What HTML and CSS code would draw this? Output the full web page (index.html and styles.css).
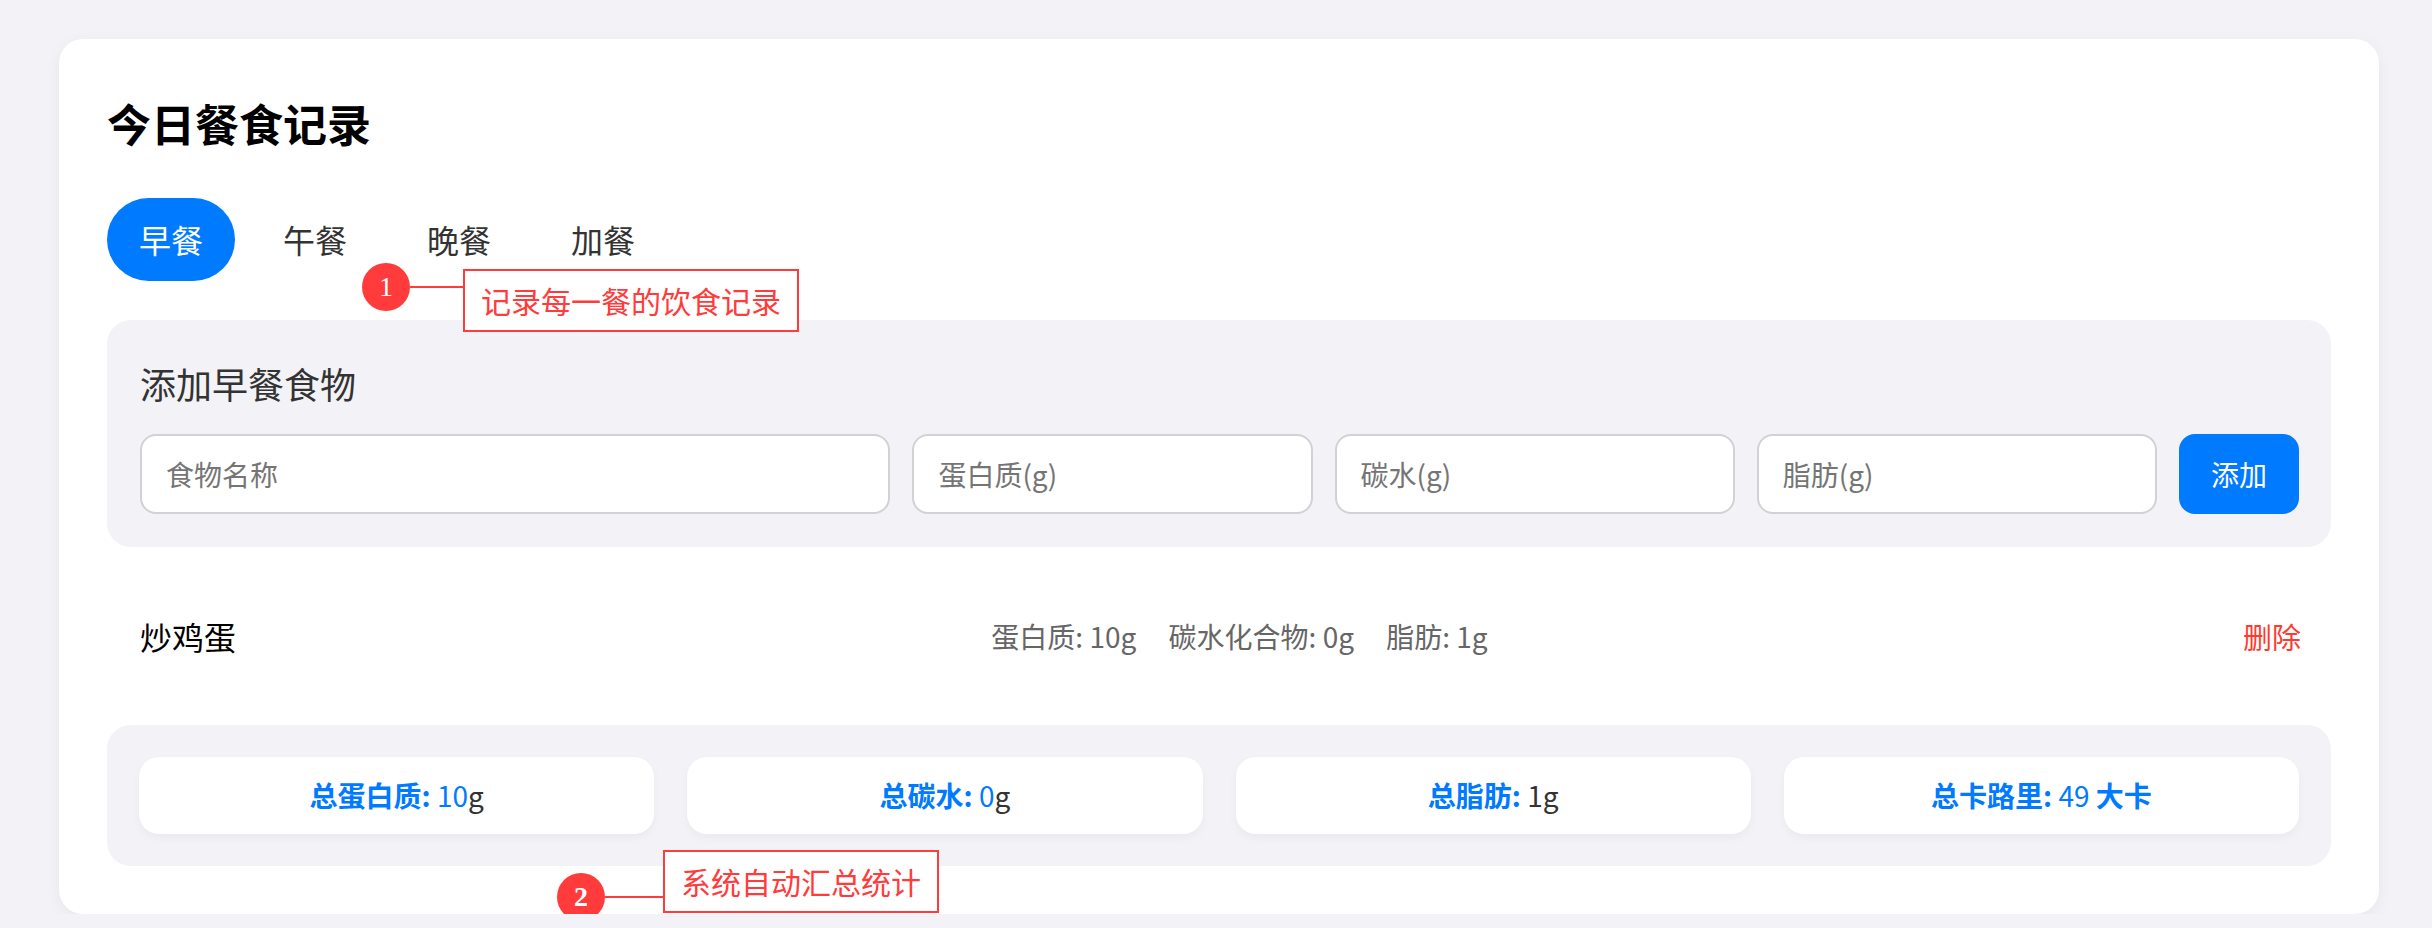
FILE: index.html
```html
<!DOCTYPE html>
<html lang="zh-CN">

<head>
    <meta charset="UTF-8">
    <meta name="viewport" content="width=device-width, initial-scale=1.0">
    <title>今日餐食记录</title>
    <link rel="stylesheet" href="styles.css">
</head>

<body>
    <div id="card">
        <h1 id="title">今日餐食记录</h1>

        <div id="tabs">
            <div class="tab active">早餐</div>
            <div class="tab">午餐</div>
            <div class="tab">晚餐</div>
            <div class="tab">加餐</div>
        </div>

        <div id="addPanel">
            <div id="addTitle">添加早餐食物</div>
            <div id="addForm">
                <input type="text" placeholder="食物名称">
                <input type="text" placeholder="蛋白质(g)">
                <input type="text" placeholder="碳水(g)">
                <input type="text" placeholder="脂肪(g)">
                <div id="addBtn">添加</div>
            </div>
        </div>

        <div id="foodList">
            <div class="food">
                <div class="foodName">炒鸡蛋</div>
                <div class="macros">
                    <span>蛋白质: 10g</span>
                    <span>碳水化合物: 0g</span>
                    <span>脂肪: 1g</span>
                </div>
                <div class="delete">删除</div>
            </div>
        </div>

        <div id="summary">
            <div class="sum"><b>总蛋白质:</b> <span class="num">10</span>g</div>
            <div class="sum"><b>总碳水:</b> <span class="num">0</span>g</div>
            <div class="sum"><b>总脂肪:</b> 1g</div>
            <div class="sum"><b>总卡路里:</b> <span class="num">49</span> <b>大卡</b></div>
        </div>

        <!-- 標註 -->
        <div class="note note1">
            <div class="dot">1</div>
            <div class="line"></div>
            <div class="label">记录每一餐的饮食记录</div>
        </div>
        <div class="note note2">
            <div class="dot">2</div>
            <div class="line"></div>
            <div class="label">系统自动汇总统计</div>
        </div>
    </div>
</body>

</html>
```

FILE: styles.css
```css
body {
    margin: 0;
    padding: 39px 53px 0 59px;
    background: #f2f2f7;
    font-family: "Noto Sans CJK SC", "Noto Sans", sans-serif;
    color: #333;
    overflow: hidden;
}

#card {
    position: relative;
    background: #fff;
    border-radius: 24px;
    padding: 48px;
    box-shadow: 0 4px 16px rgba(0, 0, 0, 0.05);
}

#title {
    margin: 10px 0 0;
    font-size: 44px;
    line-height: 53px;
    font-weight: bold;
    color: #000;
}

#tabs {
    display: flex;
    gap: 16px;
    margin-top: 48px;
}

.tab {
    padding: 22px 32px;
    font-size: 32px;
    line-height: 39px;
    border-radius: 42px;
    color: #333;
}

.tab.active {
    background: #007aff;
    color: #fff;
}

#addPanel {
    margin-top: 39px;
    background: #f2f2f7;
    border-radius: 24px;
    padding: 32px 32px 33px 33px;
}

#addTitle {
    margin-top: 10px;
    font-size: 36px;
    line-height: 43px;
    color: #333;
}

#addForm {
    display: grid;
    grid-template-columns: 15fr 8fr 8fr 8fr auto;
    gap: 22px;
    margin-top: 29px;
}

#addForm input {
    min-width: 0;
    height: 80px;
    box-sizing: border-box;
    border: 2px solid #d1d1d6;
    border-radius: 16px;
    padding: 0 24px;
    font-family: inherit;
    font-size: 28px;
    color: #333;
    background: #fff;
    outline: none;
}

#addForm input::placeholder {
    color: #757575;
}

#addBtn {
    height: 80px;
    line-height: 80px;
    padding: 0 32px;
    border-radius: 16px;
    background: #007aff;
    color: #fff;
    font-size: 28px;
    text-align: center;
}

#foodList {
    margin-top: 45px;
}

.food {
    display: flex;
    justify-content: space-between;
    align-items: center;
    padding: 24px 30px 24px 33px;
    line-height: 40px;
}

.foodName {
    font-size: 32px;
    color: #000;
}

.macros {
    font-size: 28px;
    color: #666;
}

.macros span {
    margin: 0 13px;
}

.delete {
    font-size: 29px;
    color: #ff3b30;
}

#summary {
    display: grid;
    grid-template-columns: repeat(4, 1fr);
    gap: 33px;
    margin-top: 45px;
    background: #f2f2f7;
    border-radius: 24px;
    padding: 32px;
}

.sum {
    background: #fff;
    border-radius: 20px;
    padding: 20px 0;
    line-height: 37px;
    text-align: center;
    font-size: 28px;
    color: #333;
    box-shadow: 0 4px 10px rgba(0, 0, 0, 0.04);
}

.sum b,
.num {
    color: #007aff;
}

/* 標註 */
.note {
    position: absolute;
    display: flex;
    align-items: flex-start;
}

.note1 {
    left: 303px;
    top: 224px;
}

.note2 {
    left: 498px;
    top: 811px;
}

.dot {
    width: 48px;
    height: 48px;
    border-radius: 50%;
    background: #ff3b3b;
    color: #fff;
    font-family: "Liberation Serif", serif;
    font-size: 28px;
    line-height: 48px;
    text-align: center;
}

.line {
    height: 2px;
    background: #ff3b3b;
    margin-top: 23px;
}

.note1 .line {
    width: 53px;
}

.note1 .label {
    margin-top: 6px;
}

.note2 .dot {
    margin-top: 23px;
    font-weight: bold;
}

.note2 .line {
    width: 58px;
    margin-top: 46px;
}

.label {
    background: #fff;
    border: 2px solid #ff3b3b;
    padding: 0 16px;
    height: 59px;
    line-height: 59px;
    font-size: 30px;
    color: #ff3b3b;
    white-space: nowrap;
}
```
